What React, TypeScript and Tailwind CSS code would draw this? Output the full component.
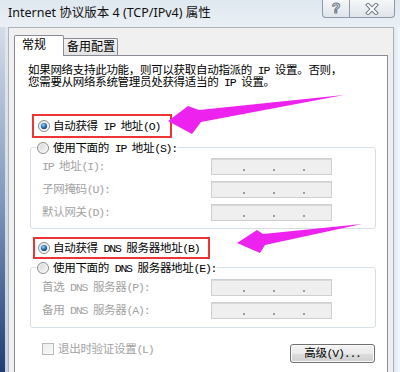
import React from "react";

const sim = "font-['Liberation_Mono','Noto_Sans_CJK_SC',monospace] text-[11.5px] leading-[11px] tracking-[-0.3px]";

// latin runs are set tighter so they take about half a CJK cell, as in SimSun
function T({ children }: { children: string }) {
  const parts = children.split(/([\x20-\x7e]+)/);
  return (
    <>
      {parts.map((p, i) =>
        /[\x20-\x7e]/.test(p) ? (
          <span key={i} className="tracking-[-1.2px]">
            {p}
          </span>
        ) : (
          p
        )
      )}
    </>
  );
}

function Radio({ checked }: { checked?: boolean }) {
  return (
    <svg width="12" height="12" viewBox="0 0 12 12" className="shrink-0">
      <defs>
        <linearGradient id="radioBg" x1="0" y1="0" x2="1" y2="1">
          <stop offset="0" stopColor="#d2d2d2" />
          <stop offset="1" stopColor="#fbfbfb" />
        </linearGradient>
        <radialGradient id="radioDot" cx="0.4" cy="0.35" r="0.7">
          <stop offset="0" stopColor="#a6d8ff" />
          <stop offset="0.45" stopColor="#3583c8" />
          <stop offset="1" stopColor="#0b3a69" />
        </radialGradient>
      </defs>
      <circle cx="6" cy="6" r="5.5" fill="url(#radioBg)" stroke="#8a8a8a" />
      <circle cx="6" cy="6" r="4.3" fill="none" stroke="#f7f7f7" strokeWidth="0.8" />
      {checked && <circle cx="6" cy="6" r="3.1" fill="url(#radioDot)" />}
    </svg>
  );
}

function IpField() {
  return (
    <div className="flex h-[17px] w-[121px] items-end gap-[28px] border border-[#cdd0d3] bg-[#efefef] pb-[3px] pl-[31px] shadow-[inset_0_1px_0_#d9d9d9]">
      <span className="h-[2px] w-[2px] bg-[#9c9c9c]" />
      <span className="h-[2px] w-[2px] bg-[#9c9c9c]" />
      <span className="h-[2px] w-[2px] bg-[#9c9c9c]" />
    </div>
  );
}

function FieldRow({ label, className = "" }: { label: string; className?: string }) {
  return (
    <div className={`flex h-[17px] items-center pl-[11px] ${className}`}>
      <span className="w-[169px] whitespace-nowrap text-[#a2a2a2]">
        <T>{label}</T>
      </span>
      <IpField />
    </div>
  );
}

export default function App() {
  return (
    <div className={`relative flex h-[372px] w-[400px] flex-col overflow-hidden bg-[#e4ebf2] ${sim}`}>
      {/* title bar */}
      <div className="flex h-[27px] shrink-0 items-start bg-gradient-to-b from-[#dfe7ef] to-[#eaf0f5]">
        <div className="flex h-[27px] items-center pl-[8px] font-['Noto_Sans','Noto_Sans_CJK_SC',sans-serif] text-[12.5px] leading-none tracking-normal text-[#111]">
          Internet 协议版本 4 (TCP/IPv4) 属性
        </div>
        <div className="ml-auto mr-[5px] flex h-[18px]">
          <div className="flex w-[28px] items-center justify-center rounded-bl-[4px] border border-t-0 border-[#8f9aa6] bg-gradient-to-b from-[#f5f7f9] to-[#dfe5eb] font-['Liberation_Sans',sans-serif] text-[14px] font-bold text-white [-webkit-text-stroke:1px_#6e7883]">
            ?
          </div>
          <div className="flex w-[45px] items-center justify-center rounded-br-[4px] border border-l-0 border-t-0 border-[#8f9aa6] bg-gradient-to-b from-[#f5f7f9] to-[#dfe5eb]">
            <svg width="14" height="12" viewBox="0 0 14 12">
              <path d="M3 2 L11 10 M11 2 L3 10" stroke="#6e7883" strokeWidth="4" strokeLinecap="square" />
              <path d="M3 2 L11 10 M11 2 L3 10" stroke="#ffffff" strokeWidth="2" strokeLinecap="square" />
            </svg>
          </div>
        </div>
      </div>

      <div className="flex flex-1">
        {/* left frame */}
        <div className="flex w-[8px] shrink-0">
          <div className="w-[5px] bg-gradient-to-b from-[#d5dde7] via-[#8299bd] to-[#223e74]" />
          <div className="w-[3px] bg-gradient-to-b from-[#e2e7ed] to-[#c9d2de]" />
        </div>

        {/* dialog body */}
        <div className="flex w-[386px] shrink-0 flex-col border-l border-r border-t border-[#a9b3be] bg-[#f0f0f0] px-[5px] pt-[7px]">
          {/* tabs */}
          <div className="flex h-[20px] items-end">
            <div className="relative z-10 -mb-px flex h-[21px] w-[50px] items-center rounded-t-[2px] border border-b-0 border-[#898c95] bg-white pl-[7px] text-[12px] leading-none tracking-normal">
              常规
            </div>
            <div className="-ml-px flex h-[17px] w-[55px] items-center rounded-t-[2px] border border-b-0 border-[#898c95] bg-gradient-to-b from-[#f3f3f3] to-[#e4e4e4] pl-[3px] pt-[1px] text-[12px] leading-none tracking-normal">
              备用配置
            </div>
          </div>

          {/* tab page */}
          <div className="flex flex-1 flex-col border border-b-0 border-[#898c95] bg-white">
            <p className="mt-[9px] whitespace-nowrap pl-[13px] leading-[12px] text-black">
              <T>如果网络支持此功能，则可以获取自动指派的 IP 设置。否则，</T>
              <br />
              <T>您需要从网络系统管理员处获得适当的 IP 设置。</T>
            </p>

            <div className="ml-[17px] mt-[25px] flex h-[24px] w-[140px] items-center gap-[3px] border-2 border-[#ee3535] pl-[4px]">
              <Radio checked />
              <span className="whitespace-nowrap">
                <T>自动获得 IP 地址(O)</T>
              </span>
            </div>

            <div className="ml-[15px] mt-[9px] flex w-[346px] flex-col rounded-[3px] border border-[#d5dfe5] pb-[7px]">
              <div className="-mt-[7px] ml-[5px] flex h-[14px] w-fit items-center gap-[4px] bg-white px-[1px]">
                <Radio />
                <span className="whitespace-nowrap">
                  <T>使用下面的 IP 地址(S):</T>
                </span>
              </div>
              <FieldRow label="IP 地址(I):" className="mt-[3px]" />
              <FieldRow label="子网掩码(U):" className="mt-[6px]" />
              <FieldRow label="默认网关(D):" className="mt-[6px]" />
            </div>

            <div className="ml-[18px] mt-[8px] flex h-[22px] w-[177px] items-center gap-[3px] border-2 border-[#ee3535] pl-[3px]">
              <Radio checked />
              <span className="whitespace-nowrap">
                <T>自动获得 DNS 服务器地址(B)</T>
              </span>
            </div>

            <div className="ml-[15px] mt-[8px] flex w-[346px] flex-col rounded-[3px] border border-[#d5dfe5] pb-[8px]">
              <div className="-mt-[7px] ml-[5px] flex h-[14px] w-fit items-center gap-[4px] bg-white px-[1px]">
                <Radio />
                <span className="whitespace-nowrap">
                  <T>使用下面的 DNS 服务器地址(E):</T>
                </span>
              </div>
              <FieldRow label="首选 DNS 服务器(P):" className="mt-[4px]" />
              <FieldRow label="备用 DNS 服务器(A):" className="mt-[6px]" />
            </div>

            <div className="mt-[15px] flex items-start justify-between pl-[27px] pr-[12px]">
              <div className="flex h-[12px] items-center gap-[4px]">
                <span className="h-[12px] w-[12px] border border-[#b9b9b9] bg-gradient-to-br from-[#ececec] to-[#fafafa]" />
                <span className="whitespace-nowrap text-[#a2a2a2]">
                  <T>退出时验证设置(L)</T>
                </span>
              </div>
              <button className="mt-[1px] flex h-[19px] w-[85px] items-center justify-center rounded-[3px] border border-[#707070] bg-[linear-gradient(#f2f2f2_0%,#ebebeb_50%,#dddddd_51%,#cfcfcf_100%)] text-black shadow-[inset_0_0_0_1px_#fbfbfb]">
                <T>高级(V)...</T>
              </button>
            </div>
          </div>
        </div>

        {/* right frame */}
        <div className="flex-1 bg-gradient-to-r from-[#dfe9f3] to-[#f4f8fc]" />
      </div>

      {/* annotation arrows */}
      <svg className="pointer-events-none absolute left-0 top-0" width="400" height="372" viewBox="0 0 400 372">
        <polygon points="344,95 199,110 188,106 168,121 192,134 201,122" fill="#ee22ee" />
        <polygon points="362,224 263,234 257,230 237,243 260,253 265,245" fill="#ee22ee" />
      </svg>
    </div>
  );
}
